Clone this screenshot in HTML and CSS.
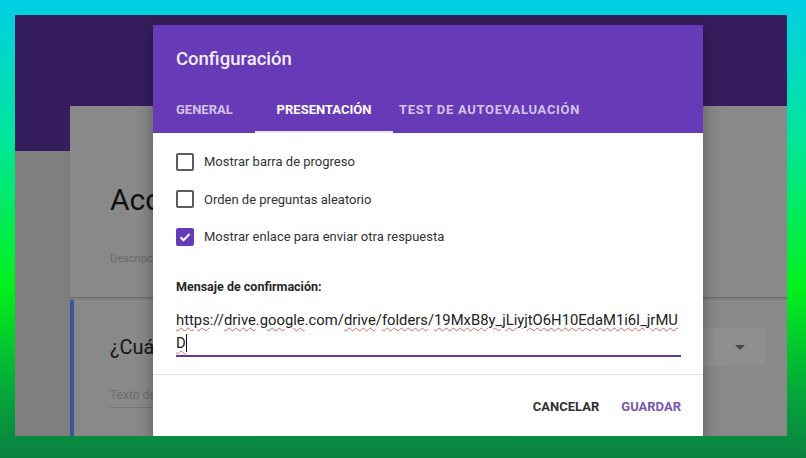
FILE: index.html
```html
<!DOCTYPE html>
<html lang="es">
<head>
    <meta charset="UTF-8">
    <meta name="viewport" content="width=device-width, initial-scale=1.0">
    <title>Configuración</title>
    <link rel="stylesheet" href="styles.css">
</head>
<body>
    <div class="screen">
        <div class="form-header"></div>
        <div class="form-page">
            <div class="card title-card">
                <div class="form-title">Acceso</div>
                <div class="form-desc">Descripción del formulario</div>
            </div>
            <div class="card question-card">
                <div class="question-row">
                    <div class="question">¿Cuál es tu nombre?</div>
                    <div class="type-select"><span class="arrow"></span></div>
                </div>
                <div class="short-answer">Texto de respuesta breve</div>
            </div>
        </div>

        <div class="dialog">
            <div class="dialog-head">
                <div class="dialog-title">Configuración</div>
                <div class="tabs">
                    <div class="tab tab-general">General</div>
                    <div class="tab tab-active">Presentación</div>
                    <div class="tab tab-test">Test de autoevaluación</div>
                </div>
            </div>
            <div class="dialog-body">
                <div class="check-row">
                    <span class="box"></span>
                    <span>Mostrar barra de progreso</span>
                </div>
                <div class="check-row">
                    <span class="box"></span>
                    <span>Orden de preguntas aleatorio</span>
                </div>
                <div class="check-row">
                    <span class="box checked">
                        <svg width="14" height="14" viewBox="0 0 14 14"><path d="M2.5 7.2l3 3 6-6.2" fill="none" stroke="#fff" stroke-width="2"/></svg>
                    </span>
                    <span>Mostrar enlace para enviar otra respuesta</span>
                </div>
                <div class="field-label">Mensaje de confirmación:</div>
                <div class="field-input">
                    <span class="sp">https</span>://<span class="sp">drive</span>.<span class="sp">google</span>.com/<span class="sp">drive</span>/<span class="sp">folders</span>/<span class="sp">19MxB8y_jLiyjtO6H10EdaM1i6I_jrMU</span><br><span class="sp caret">D</span>
                </div>
            </div>
            <div class="dialog-actions">
                <span class="btn">Cancelar</span>
                <span class="btn btn-primary">Guardar</span>
            </div>
        </div>
    </div>
</body>
</html>
```

FILE: styles.css
```css
body {
    margin: 0;
    height: 458px;
    overflow: hidden;
    font-family: Roboto, "Liberation Sans", sans-serif;
    background: linear-gradient(180deg, #00cfe4 0%, #00e59c 30%, #00f11c 63%, #04a63a 86%, #0a8042 100%);
}
.screen {
    position: relative;
    margin: 15px 0 0 15px;
    width: 772px;
    height: 421px;
    overflow: hidden;
    background-color: #7f7f80;
}
.form-header {
    height: 136px;
    background-color: #361d5e;
}
.form-page {
    margin-top: -45px;
    margin-left: 55px;
    display: flex;
    flex-direction: column;
    gap: 3px;
}
.card {
    background-color: #898989;
    box-shadow: 0 1px 1px rgba(0, 0, 0, 0.15);
}
.title-card {
    height: 191px;
    padding: 76px 0 0 40px;
    box-sizing: border-box;
}
.form-title {
    font-size: 30px;
    color: #111;
    line-height: 36px;
}
.form-desc {
    margin-top: 34px;
    font-size: 11px;
    color: #6a6a6a;
}
.question-card {
    height: 140px;
    border-left: 4px solid #3d5796;
    padding: 28px 22px 0 36px;
    box-sizing: border-box;
}
.question-row {
    display: flex;
    justify-content: space-between;
    align-items: center;
}
.question {
    font-size: 20px;
    color: #161616;
}
.type-select {
    width: 64px;
    height: 38px;
    background-color: #8f8f8f;
    display: flex;
    align-items: center;
    justify-content: center;
    padding-left: 14px;
    box-sizing: border-box;
}
.arrow {
    border-left: 5px solid transparent;
    border-right: 5px solid transparent;
    border-top: 5px solid #4a4a4a;
}
.short-answer {
    margin-top: 22px;
    width: 180px;
    font-size: 12px;
    color: #6c6c6c;
    padding-bottom: 5px;
    border-bottom: 1px solid #777;
}

/* dialog */
.dialog {
    position: absolute;
    left: 138px;
    top: 10px;
    width: 550px;
    height: 430px;
    background-color: #fff;
    box-shadow: 0 4px 16px rgba(0, 0, 0, 0.35);
}
.dialog-head {
    background-color: #673ab7;
    height: 108px;
}
.dialog-title {
    padding: 22px 0 14px 23px;
    font-size: 18.5px;
    line-height: 24px;
    font-weight: 500;
    color: #f4eefc;
}
.tabs {
    display: flex;
    height: 48px;
}
.tab {
    display: flex;
    align-items: center;
    justify-content: center;
    box-sizing: border-box;
    font-size: 13px;
    font-weight: 700;
    text-transform: uppercase;
    color: #d3c4ef;
}
.tab-general {
    width: 102px;
    justify-content: flex-start;
    padding-left: 23px;
}
.tab-active {
    width: 138px;
    color: #fff;
    border-bottom: 2px solid #ede6f8;
    padding-top: 2px;
}
.tab-test {
    padding-left: 6px;
    letter-spacing: 0.7px;
}
.dialog-body {
    padding: 10px 22px 17px 23px;
    border-bottom: 1px solid #e4e4e4;
}
.check-row {
    display: flex;
    align-items: center;
    gap: 10px;
    height: 37.5px;
    font-size: 13px;
    color: #333;
}
.box {
    width: 18px;
    height: 18px;
    box-sizing: border-box;
    border: 2px solid #5c5c5c;
    border-radius: 2px;
    display: flex;
    align-items: center;
    justify-content: center;
}
.box.checked {
    background-color: #673ab7;
    border-color: #673ab7;
}
.field-label {
    margin-top: 23px;
    font-size: 12.5px;
    font-weight: 700;
    color: #262626;
}
.field-input {
    margin-top: 15px;
    font-size: 14.8px;
    line-height: 23px;
    color: #222;
    border-bottom: 2px solid #5e3a9f;
}
.sp {
    text-decoration: underline wavy #e06060;
    text-decoration-thickness: 1px;
    text-underline-offset: 2px;
}
.caret {
    border-right: 1px solid #111;
}
.dialog-actions {
    display: flex;
    justify-content: flex-end;
    gap: 22px;
    padding: 24px 22px 0 0;
}
.btn {
    font-size: 13px;
    font-weight: 700;
    text-transform: uppercase;
    color: #303030;
}
.btn-primary {
    color: #7656b0;
}
```
